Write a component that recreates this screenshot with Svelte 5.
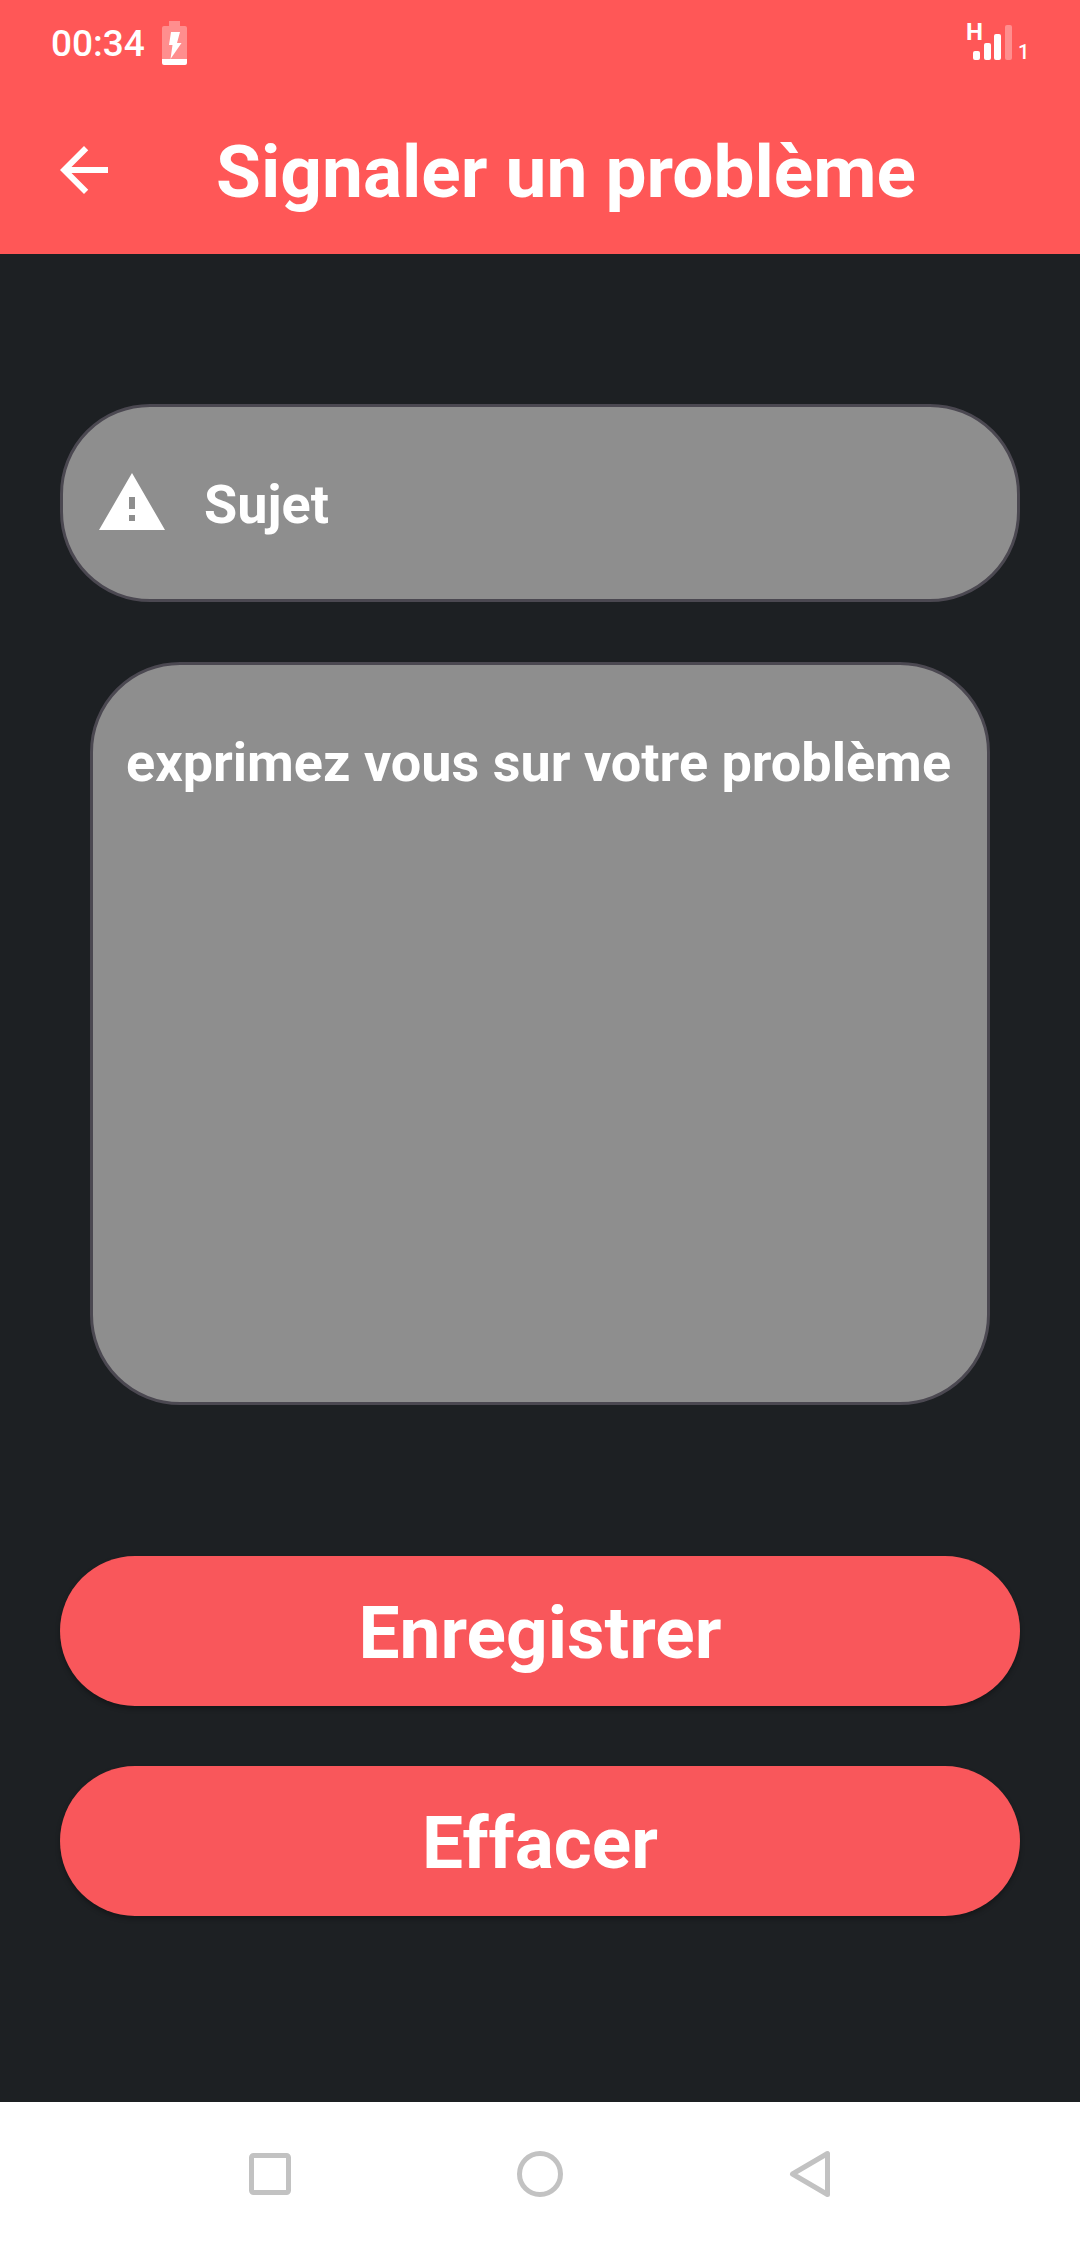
<script>
  let subject = $state('');
  let details = $state('');

  function clear() {
    subject = '';
    details = '';
  }
</script>

<div class="screen">
  <header>
    <div class="status">
      <div class="status-group">
        <span class="clock">00:34</span>
        <svg class="battery" viewBox="0 0 25 44" aria-hidden="true">
          <path d="M7 0h11v5h5a2 2 0 0 1 2 2v31H0V7a2 2 0 0 1 2-2h5z" fill="#fff" fill-opacity=".33" />
          <path d="M0 38h25v4a2 2 0 0 1-2 2H2a2 2 0 0 1-2-2z" fill="#fff" />
          <path d="M9 11h9l-3 11h4.500L8.500 38l2-14H7z" fill="#fff" />
        </svg>
      </div>
      <svg class="signal" viewBox="0 -8 66 60" aria-hidden="true">
        <text class="network" x="0" y="19">H</text>
        <rect x="7" y="30" width="7" height="9" rx="2" />
        <rect x="18" y="22" width="7" height="17" rx="2" />
        <rect x="28" y="13" width="7" height="26" rx="2" />
        <rect x="39" y="4" width="7" height="35" rx="2" fill-opacity=".33" />
        <text class="sim" x="52" y="38">1</text>
      </svg>
    </div>
    <div class="toolbar">
      <button class="back" type="button" aria-label="Retour">
        <svg viewBox="0 0 24 24" aria-hidden="true">
          <path d="M20 11H7.830l5.590-5.590L12 4l-8 8 8 8 1.410-1.410L7.830 13H20z" fill="#fff" />
        </svg>
      </button>
      <h1>Signaler un problème</h1>
    </div>
  </header>

  <main>
    <form onsubmit={(event) => event.preventDefault()}>
      <div class="field">
        <svg viewBox="0 0 24 24" aria-hidden="true">
          <path d="M1 21h22L12 2zM13 18h-2v-2h2zM13 14h-2v-4h2z" fill="#fff" fill-rule="evenodd" />
        </svg>
        <input type="text" aria-label="Sujet" placeholder="Sujet" bind:value={subject} />
      </div>
      <textarea
        rows="10"
        aria-label="exprimez vous sur votre problème"
        placeholder="exprimez vous sur votre problème"
        bind:value={details}
      ></textarea>
      <div class="actions">
        <button type="submit">Enregistrer</button>
        <button type="button" onclick={clear}>Effacer</button>
      </div>
    </form>
  </main>

  <nav aria-label="Système">
    <button type="button" aria-label="Applications récentes">
      <svg viewBox="0 0 48 48" aria-hidden="true">
        <rect x="5.500" y="5.500" width="37" height="37" rx="2" />
      </svg>
    </button>
    <button type="button" aria-label="Accueil">
      <svg viewBox="0 0 48 48" aria-hidden="true">
        <circle cx="24" cy="24" r="20.500" />
      </svg>
    </button>
    <button type="button" aria-label="Précédent">
      <svg viewBox="0 0 48 48" aria-hidden="true">
        <path d="M41.500 3.500v41L6.500 24z" />
      </svg>
    </button>
  </nav>
</div>

<style>
  :global(body) {
    margin: 0;
    background: #1d2023;
  }

  .screen {
    display: flex;
    flex-direction: column;
    min-height: 100vh;
    font-family: Roboto, 'Liberation Sans', sans-serif;
    color: #fff;
    background: #1d2023;
  }

  button,
  input,
  textarea {
    margin: 0;
    border: 0;
    font: inherit;
    color: inherit;
  }

  button {
    cursor: pointer;
  }

  header {
    background: #ff5757;
  }

  .status {
    display: flex;
    align-items: center;
    justify-content: space-between;
    height: 86px;
    padding: 0 48px 0 51px;
  }

  .status-group {
    display: flex;
    align-items: center;
    gap: 17px;
  }

  .clock {
    padding-top: 2px;
    font-size: 37px;
    font-weight: 500;
    line-height: 44px;
  }

  .battery {
    width: 25px;
    height: 44px;
  }

  .signal {
    width: 66px;
    height: 60px;
    fill: #fff;
  }

  .network {
    font-size: 24px;
    font-weight: 700;
  }

  .sim {
    font-size: 20px;
    font-weight: 500;
  }

  .toolbar {
    display: flex;
    align-items: center;
    gap: 96px;
    height: 168px;
    padding: 0 48px;
  }

  .back {
    display: flex;
    padding: 0;
    background: none;
  }

  .back svg,
  .field svg {
    flex: none;
    width: 72px;
    height: 72px;
  }

  h1 {
    margin: 0;
    padding-top: 4px;
    font-size: 73px;
    font-weight: 700;
    line-height: 84px;
    white-space: nowrap;
  }

  main {
    flex: 1;
    padding: 150px 60px;
  }

  form {
    display: flex;
    flex-direction: column;
    gap: 60px;
  }

  .field,
  textarea {
    box-sizing: border-box;
    border: 3px solid #4b4851;
    border-radius: 90px;
    background: #8e8e8e;
    font-size: 54px;
    font-weight: 700;
    line-height: 64px;
  }

  .field {
    display: flex;
    align-items: center;
    gap: 36px;
    height: 198px;
    padding: 0 33px;
  }

  input {
    flex: 1;
    min-width: 0;
    padding: 4px 0 0;
    background: none;
    outline: none;
  }

  textarea {
    display: block;
    margin: 0 30px;
    padding: 66px 16px 31px 33px;
    resize: none;
    outline: none;
    overflow: hidden;
  }

  input::placeholder,
  textarea::placeholder {
    color: #fff;
    opacity: 1;
  }

  .actions {
    display: flex;
    flex-direction: column;
    gap: 60px;
    margin-top: 91px;
  }

  .actions button {
    height: 150px;
    padding: 4px 24px 0;
    border-radius: 75px;
    background: #f9575b;
    box-shadow: 0 3px 5px rgba(0, 0, 0, 0.3);
    font-size: 73px;
    font-weight: 700;
    line-height: 84px;
  }

  nav {
    display: grid;
    grid-template-columns: repeat(3, 1fr);
    height: 144px;
    padding: 0 12.5%;
    background: #fff;
  }

  nav button {
    display: flex;
    align-items: center;
    justify-content: center;
    padding: 0;
    background: none;
  }

  nav svg {
    width: 48px;
    height: 48px;
    fill: none;
    stroke: #c2c2c2;
    stroke-width: 5px;
    stroke-linejoin: round;
  }
</style>
